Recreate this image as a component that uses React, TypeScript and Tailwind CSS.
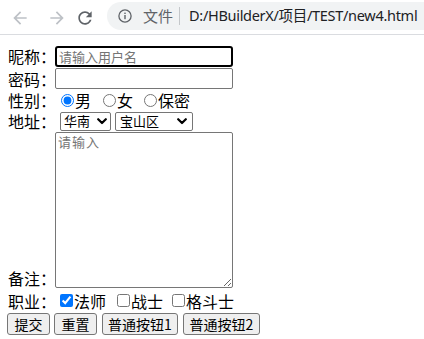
import React from 'react';

const Chevron: React.FC = () => (
    <svg width="10" height="7" viewBox="0 0 10 7" fill="none">
        <path d="M1.2 1.2 5 5 8.8 1.2" stroke="#000" strokeWidth="2.2" strokeLinecap="round" strokeLinejoin="round" />
    </svg>
);

const Label: React.FC<{ text: string; className?: string }> = ({ text, className }) => (
    <span className={`w-[47px] shrink-0 whitespace-nowrap leading-[18px] ${className ?? ''}`}>{text}</span>
);

const App: React.FC = () => {
    return (
        <div className="w-[424px] h-[339px] bg-white overflow-hidden text-black font-['Noto_Sans','Noto_Sans_CJK_SC',sans-serif]">
            {/* browser bar */}
            <div className="h-[35px] border-b border-[#dadce0] flex items-start">
                <svg className="ml-[10px] mt-[8px] text-[#bdc1c6]" width="20" height="20" viewBox="0 0 24 24" fill="currentColor">
                    <path d="M20 11H7.83l5.59-5.59L12 4l-8 8 8 8 1.41-1.41L7.83 13H20v-2z" />
                </svg>
                <svg className="ml-[17px] mt-[8px] text-[#bdc1c6]" width="20" height="20" viewBox="0 0 24 24" fill="currentColor">
                    <path d="M12 4l-1.41 1.41L16.17 11H4v2h12.17l-5.58 5.59L12 20l8-8z" />
                </svg>
                <svg className="ml-[8px] mt-[8px] text-[#5f6368]" width="20" height="20" viewBox="0 0 24 24" fill="currentColor">
                    <path d="M17.65 6.35C16.2 4.9 14.21 4 12 4c-4.42 0-7.99 3.58-7.99 8s3.57 8 7.99 8c3.73 0 6.84-2.55 7.73-6h-2.08c-.82 2.33-3.04 4-5.65 4-3.31 0-6-2.69-6-6s2.69-6 6-6c1.66 0 3.14.69 4.22 1.78L13 11h7V4l-2.35 2.35z" />
                </svg>
                <div className="ml-[12px] mt-[2px] h-[28px] flex-1 rounded-l-full bg-[#f1f3f4] flex items-center pl-[11px] whitespace-nowrap">
                    <svg width="14" height="14" viewBox="0 0 14 14" fill="none" className="text-[#5f6368] shrink-0">
                        <circle cx="7" cy="7" r="6.1" stroke="currentColor" strokeWidth="1.3" />
                        <rect x="6.3" y="6" width="1.4" height="4.2" fill="currentColor" />
                        <rect x="6.3" y="3.6" width="1.4" height="1.4" fill="currentColor" />
                    </svg>
                    <span className="ml-[11px] text-[15px] text-[#5f6368]">文件</span>
                    <span className="ml-[6px] w-px h-[18px] bg-[#c4c7ca]" />
                    <span className="ml-[9px] text-[14.5px] tracking-[-0.3px] text-[#202124]">D:/HBuilderX/项目/TEST/new4.html</span>
                </div>
            </div>

            {/* form */}
            <form className="pl-[8px] pt-[10px] text-[16px] leading-[18px] font-['Noto_Sans_CJK_SC',sans-serif]">
                <div className="flex items-center h-[22px]">
                    <Label text="昵称：" />
                    <input
                        autoFocus
                        placeholder="请输入用户名"
                        className="w-[178px] h-[21px] border-2 border-black rounded-[3px] px-[2px] text-[13px] outline-none placeholder:text-[#757575]"
                    />
                </div>
                <div className="flex items-center h-[21px] mt-[1px]">
                    <Label text="密码：" />
                    <input type="password" className="w-[178px] h-[21px] border border-[#767676] rounded-[2px] px-[2px] text-[13px] outline-none" />
                </div>
                <div className="flex items-center h-[22px]">
                    <Label text="性别：" />
                    <input type="radio" name="sex" defaultChecked className="ml-[6px] w-[13px] h-[13px] m-0 accent-[#0075ff]" />
                    <span className="ml-[1px]">男</span>
                    <input type="radio" name="sex" className="ml-[12px] w-[13px] h-[13px] m-0 accent-[#0075ff]" />
                    <span className="ml-[1px]">女</span>
                    <input type="radio" name="sex" className="ml-[11px] w-[13px] h-[13px] m-0 accent-[#0075ff]" />
                    <span className="ml-[1px]">保密</span>
                </div>
                <div className="flex items-center h-[20px]">
                    <Label text="地址：" />
                    <div className="ml-[5px] w-[51px] h-[19px] border border-[#767676] rounded-[2px] flex items-center justify-between pl-[3px] pr-[3px] text-[13px]">
                        <span>华南</span>
                        <Chevron />
                    </div>
                    <div className="ml-[4px] w-[78px] h-[19px] border border-[#767676] rounded-[2px] flex items-center justify-between pl-[4px] pr-[5px] text-[13px]">
                        <span>宝山区</span>
                        <Chevron />
                    </div>
                </div>
                <div className="flex items-end mt-[1px]">
                    <Label text="备注：" className="pb-[1px]" />
                    <textarea
                        placeholder="请输入"
                        className="w-[178px] h-[156px] border border-[#767676] rounded-[2px] px-[2px] text-[13px] leading-[17px] tracking-[1px] outline-none resize placeholder:text-[#757575]"
                    />
                </div>
                <div className="flex items-center h-[25px]">
                    <Label text="职业：" />
                    <input type="checkbox" defaultChecked className="ml-[5px] w-[13px] h-[13px] m-0 accent-[#0075ff]" />
                    <span className="ml-[1px]">法师</span>
                    <input type="checkbox" className="ml-[11px] w-[13px] h-[13px] m-0 accent-[#0075ff]" />
                    <span className="ml-[1px]">战士</span>
                    <input type="checkbox" className="ml-[9px] w-[13px] h-[13px] m-0 accent-[#0075ff]" />
                    <span className="ml-[1px]">格斗士</span>
                </div>
                <div className="flex items-center gap-[4px] -ml-[1px] text-[14px] leading-none">
                    <button type="submit" className="w-[43px] h-[22px] bg-[#efefef] border border-[#767676] rounded-[3px]">提交</button>
                    <button type="reset" className="w-[43px] h-[22px] bg-[#efefef] border border-[#767676] rounded-[3px]">重置</button>
                    <button type="button" className="ml-[1px] w-[76px] h-[22px] bg-[#efefef] border border-[#767676] rounded-[3px]">普通按钮1</button>
                    <button type="button" className="ml-[1px] w-[77px] h-[22px] bg-[#efefef] border border-[#767676] rounded-[3px]">普通按钮2</button>
                </div>
            </form>
        </div>
    );
};

export default App;
